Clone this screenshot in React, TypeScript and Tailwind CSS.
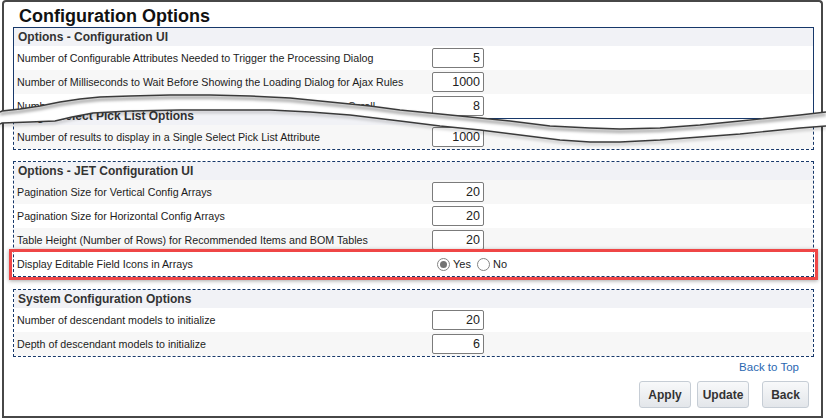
import React from 'react';

type RowProps = {
  label: string;
  value?: string;
  shaded?: boolean;
  children?: React.ReactNode;
};

const Row: React.FC<RowProps> = ({ label, value, shaded, children }) => (
  <div className={`relative flex h-[24px] items-center ${shaded ? 'bg-[#f7f7f7]' : 'bg-white'}`}>
    <div className="w-[418px] shrink-0 pl-[3px] text-[10.7px] leading-[10px] text-[#1c1c1c] whitespace-nowrap">{label}</div>
    {value !== undefined && (
      <input
        readOnly
        value={value}
        className="h-[20px] w-[52px] rounded-[2px] border border-[#7b7b7b] bg-white pr-[3px] text-right text-[12.5px] text-[#222] outline-none"
      />
    )}
    {children}
  </div>
);

type SectionProps = {
  title: string;
  solid?: boolean;
  className?: string;
  children: React.ReactNode;
};

const Section: React.FC<SectionProps> = ({ title, solid, className, children }) => (
  <div className={`border ${solid ? 'border-solid' : 'border-dashed'} border-[#17386a] ${className ?? ''}`}>
    <div className="flex h-[18px] items-center bg-[#f1f2f6] pl-[4px] text-[12px] font-bold leading-[10px] text-[#333] whitespace-nowrap">{title}</div>
    {children}
  </div>
);

const Radio: React.FC<{ checked?: boolean; label: string }> = ({ checked, label }) => (
  <label className="flex items-center">
    <span className="flex h-[13px] w-[13px] items-center justify-center rounded-full border border-[#858585] bg-white">
      {checked && <span className="h-[7px] w-[7px] rounded-full bg-[#737373]" />}
    </span>
    <span className="ml-[3px] text-[11px] leading-[10px] text-[#1c1c1c]">{label}</span>
  </label>
);

const upperLine =
  '0,112 2,111 20,109 40,106 60,102 80,99 100,97 130,96 170,95 210,95 250,96 290,98 330,102 370,106 400,110 430,113 470,117 510,121 550,126 590,128 620,129 660,128 700,125 740,121 770,118 800,115 826,112';
const lowerLine =
  '0,124 2,123 30,122 55,121 72,117 93,113 130,111 180,110 230,110 270,110 310,112 350,115 400,121 440,126 480,130 520,135 560,140 590,142 620,142 660,140 700,137 740,134 770,131 800,128 826,126';

const App: React.FC = () => {
  return (
    <div className="relative h-[420px] w-[826px] overflow-hidden bg-white font-['Liberation_Sans',Arial,sans-serif]">
      {/* top half of the torn screenshot */}
      <div className="ml-[2px] h-[140px] w-[821px] rounded-t-[4px] border-2 border-b-0 border-[#474747] pl-[9px] pr-[7px] [clip-path:polygon(0_0,821px_0,821px_112px,798px_115px,768px_118px,738px_121px,698px_125px,658px_128px,618px_129px,588px_128px,548px_126px,508px_121px,468px_117px,428px_113px,398px_110px,368px_106px,328px_102px,288px_98px,248px_96px,208px_95px,168px_95px,128px_96px,98px_97px,78px_99px,58px_102px,38px_106px,18px_109px,0_111px)]">
        <div className="pl-[6px] pt-[3px] text-[18px] font-bold leading-[22px] text-[#111]">Configuration Options</div>
        <Section title="Options - Configuration UI" solid>
          <Row label="Number of Configurable Attributes Needed to Trigger the Processing Dialog" value="5" />
          <Row label="Number of Milliseconds to Wait Before Showing the Loading Dialog for Ajax Rules" value="1000" shaded />
          <Row label="Number of Tabs to Display in the Configuration Navigation Bar Before Scroll" value="8" />
        </Section>
      </div>

      {/* bottom half of the torn screenshot */}
      <div className="ml-[2px] mt-[-36px] h-[314px] w-[821px] border-2 border-t-0 border-[#474747] pl-[9px] pr-[7px] pt-[2px] [clip-path:polygon(0_19px,28px_18px,53px_17px,70px_13px,91px_9px,128px_7px,178px_6px,228px_6px,268px_6px,308px_8px,348px_11px,398px_17px,438px_22px,478px_26px,518px_31px,558px_36px,588px_38px,618px_38px,658px_36px,698px_33px,738px_30px,768px_27px,798px_24px,821px_22px,821px_314px,0_314px)]">
        <Section title="Single Select Pick List Options">
          <Row label="Number of results to display in a Single Select Pick List Attribute" value="1000" shaded />
        </Section>

        <Section title="Options - JET Configuration UI" className="mt-[11px]">
          <Row label="Pagination Size for Vertical Config Arrays" value="20" shaded />
          <Row label="Pagination Size for Horizontal Config Arrays" value="20" />
          <Row label="Table Height (Number of Rows) for Recommended Items and BOM Tables" value="20" shaded />
          <Row label="Display Editable Field Icons in Arrays">
            <div className="ml-[5px] flex items-center gap-[6px]">
              <Radio checked label="Yes" />
              <Radio label="No" />
            </div>
            <div className="pointer-events-none absolute -bottom-[4px] -left-[5px] -right-[5px] -top-[3px] border-[3px] border-[#ef4646] shadow-[0_1px_4px_rgba(0,0,0,0.35)]" />
          </Row>
        </Section>

        <Section title="System Configuration Options" className="mt-[12px]">
          <Row label="Number of descendant models to initialize" value="20" />
          <Row label="Depth of descendant models to initialize" value="6" shaded />
        </Section>

        <div className="mr-[15px] mt-[3px] text-right text-[11.5px] leading-[14px] text-[#2a67b1]">Back to Top</div>

        <div className="mr-[5px] mt-[7px] flex justify-end">
          <button className="h-[27px] w-[52px] rounded-[3px] border border-[#c6cdd5] bg-linear-to-b from-[#f8f9fa] to-[#e3e6ea] text-[12px] font-bold text-[#333]">Apply</button>
          <button className="ml-[6px] h-[27px] w-[52px] rounded-[3px] border border-[#c6cdd5] bg-linear-to-b from-[#f8f9fa] to-[#e3e6ea] text-[12px] font-bold text-[#333]">Update</button>
          <button className="ml-[13px] h-[27px] w-[47px] rounded-[3px] border border-[#c6cdd5] bg-linear-to-b from-[#f8f9fa] to-[#e3e6ea] text-[12px] font-bold text-[#333]">Back</button>
        </div>
      </div>

      {/* torn edge drawing */}
      <svg className="pointer-events-none absolute left-0 top-0" width="826" height="160" viewBox="0 0 826 160">
        <defs>
          <filter id="tearShadow" x="-5%" y="-50%" width="110%" height="200%">
            <feGaussianBlur stdDeviation="1.4" />
          </filter>
        </defs>
        <polyline points={upperLine} fill="none" stroke="#000" strokeOpacity="0.35" strokeWidth="3" transform="translate(0 2.5)" filter="url(#tearShadow)" />
        <polyline points={lowerLine} fill="none" stroke="#000" strokeOpacity="0.2" strokeWidth="2.5" transform="translate(0 2)" filter="url(#tearShadow)" />
        <polyline points={upperLine} fill="none" stroke="#3a3a3a" strokeWidth="1.4" />
        <polyline points={lowerLine} fill="none" stroke="#3a3a3a" strokeWidth="1.4" />
      </svg>
    </div>
  );
};

export default App;
